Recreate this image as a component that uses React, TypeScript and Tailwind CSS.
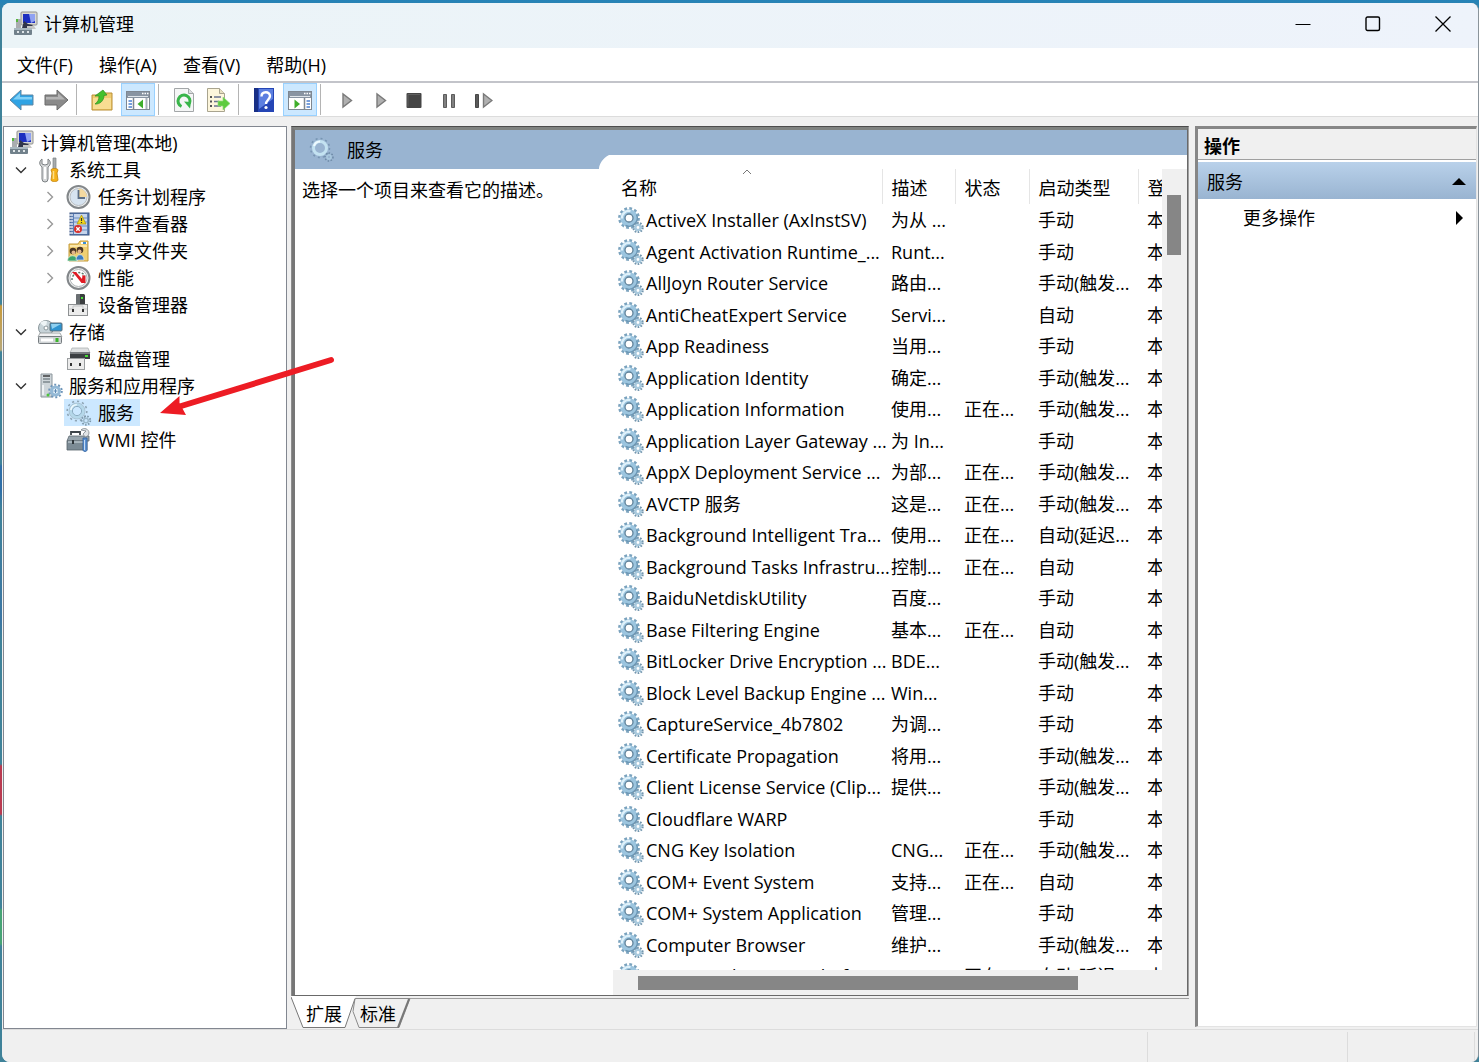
import { useState } from "react"
import type { ReactNode } from "react"

type Service = {
  name: string
  desc: string
  status?: string
  startup: string
}

const RUNNING = "正在..."
const MANUAL = "手动"
const AUTO = "自动"
const TRIGGER = "手动(触发..."
const DELAYED = "自动(延迟..."

const services: Service[] = [
  { name: "ActiveX Installer (AxInstSV)", desc: "为从 ...", startup: MANUAL },
  { name: "Agent Activation Runtime_...", desc: "Runt...", startup: MANUAL },
  { name: "AllJoyn Router Service", desc: "路由...", startup: TRIGGER },
  { name: "AntiCheatExpert Service", desc: "Servi...", startup: AUTO },
  { name: "App Readiness", desc: "当用...", startup: MANUAL },
  { name: "Application Identity", desc: "确定...", startup: TRIGGER },
  { name: "Application Information", desc: "使用...", status: RUNNING, startup: TRIGGER },
  { name: "Application Layer Gateway ...", desc: "为 In...", startup: MANUAL },
  { name: "AppX Deployment Service ...", desc: "为部...", status: RUNNING, startup: TRIGGER },
  { name: "AVCTP 服务", desc: "这是...", status: RUNNING, startup: TRIGGER },
  { name: "Background Intelligent Tra...", desc: "使用...", status: RUNNING, startup: DELAYED },
  { name: "Background Tasks Infrastru...", desc: "控制...", status: RUNNING, startup: AUTO },
  { name: "BaiduNetdiskUtility", desc: "百度...", startup: MANUAL },
  { name: "Base Filtering Engine", desc: "基本...", status: RUNNING, startup: AUTO },
  { name: "BitLocker Drive Encryption ...", desc: "BDE...", startup: TRIGGER },
  { name: "Block Level Backup Engine ...", desc: "Win...", startup: MANUAL },
  { name: "CaptureService_4b7802", desc: "为调...", startup: MANUAL },
  { name: "Certificate Propagation", desc: "将用...", startup: TRIGGER },
  { name: "Client License Service (Clip...", desc: "提供...", startup: TRIGGER },
  { name: "Cloudflare WARP", desc: "", startup: MANUAL },
  { name: "CNG Key Isolation", desc: "CNG...", status: RUNNING, startup: TRIGGER },
  { name: "COM+ Event System", desc: "支持...", status: RUNNING, startup: AUTO },
  { name: "COM+ System Application", desc: "管理...", startup: MANUAL },
  { name: "Computer Browser", desc: "维护...", startup: TRIGGER },
  { name: "Connected Devices Platfor...", desc: "", status: RUNNING, startup: DELAYED },
]

/* ---------- icons ---------- */

function ComputerIcon() {
  return (
    <svg width="26" height="26" viewBox="0 0 26 26">
      <rect x="8" y="1" width="16" height="13" rx="1" fill="#d9d9d4" stroke="#8f908c" />
      <rect x="10" y="3" width="12" height="9" fill="#1c2fc0" />
      <path d="M16 3h6v7l-4 2z" fill="#8fa2f2" />
      <path d="M3 8h5v9H3z" fill="#a9adb0" />
      <rect x="3" y="8" width="2" height="3" fill="#56b83c" />
      <path d="M11 10l-2 7h8l3-3-5-1z" fill="#30364a" />
      <path d="M14 15h7l2 3h-9z" fill="#c7c8c6" />
      <rect x="1" y="17" width="18" height="7" rx="1" fill="#71818b" />
      <path d="M1 18h18" stroke="#a9b8c0" strokeWidth="2" />
      <path d="M4 21h2M9 21h2M14 21h2" stroke="#dfe5e8" strokeWidth="2" />
    </svg>
  )
}

function GearIcon() {
  return (
    <svg width="26" height="26" viewBox="0 0 26 26" fill="none" className="shrink-0">
      <circle cx="11" cy="11" r="9.300" stroke="#7ba3be" strokeWidth="3.200" strokeDasharray="2.700 2.170" />
      <circle cx="11" cy="11" r="6.300" stroke="#9cc5df" strokeWidth="5" />
      <path d="M18.500 7.500a8.300 8.300 0 0 1-11 11" stroke="#6c97b5" strokeWidth="1.400" />
      <path d="M4 11.500a7 7 0 0 1 8.500-7.500" stroke="#dff1fa" strokeWidth="2.200" />
      <circle cx="11" cy="11" r="4" stroke="#5d8099" strokeWidth="1.300" fill="#fff" />
      <circle cx="20" cy="20.500" r="4.500" stroke="#7396ae" strokeWidth="2.400" strokeDasharray="1.600 1.230" />
      <circle cx="20" cy="20.500" r="2.600" stroke="#a9cade" strokeWidth="2.400" />
    </svg>
  )
}

function FadedGearIcon() {
  return (
    <svg width="26" height="26" viewBox="0 0 26 26" fill="none" className="shrink-0">
      <circle cx="11" cy="11" r="9.800" stroke="#8fa6b6" strokeWidth="1.600" strokeDasharray="2.200 2.900" />
      <circle cx="11" cy="11" r="6.300" stroke="#b5d8ea" strokeWidth="3" />
      <circle cx="11" cy="11" r="8" stroke="#a3bccb" strokeWidth="0.800" />
      <circle cx="11" cy="11" r="4.600" stroke="#86a6ba" strokeWidth="0.900" />
      <path d="M4.800 10a6.300 6.300 0 0 1 6-5.300" stroke="#effafe" strokeWidth="1.600" />
      <circle cx="20" cy="20.500" r="4.300" stroke="#7d98ab" strokeWidth="1.800" strokeDasharray="1.500 1.500" />
      <circle cx="20" cy="20.500" r="2.300" stroke="#9dbacb" strokeWidth="1.500" />
    </svg>
  )
}

function HeaderGear() {
  return (
    <svg width="26" height="26" viewBox="0 0 26 26" fill="none">
      <circle cx="11" cy="11" r="9.500" stroke="#7795b2" strokeWidth="1.500" strokeDasharray="2 3" />
      <circle cx="11" cy="11" r="6.500" stroke="#c3e2f1" strokeWidth="3" />
      <path d="M5 9a6.500 6.500 0 0 1 6-4.500" stroke="#eefaff" strokeWidth="2" />
      <circle cx="20" cy="20" r="4" stroke="#6d8aa6" strokeWidth="1.500" strokeDasharray="1.500 1.500" />
      <circle cx="20" cy="20" r="2" stroke="#a9c8de" strokeWidth="1.500" />
    </svg>
  )
}

function ToolsIcon() {
  return (
    <svg width="26" height="26" viewBox="0 0 26 26">
      <path d="M5 2C2 4 2 8 5 10v12a3 3 0 0 0 6 0V10c3-2 3-6 0-8v5l-3 1-3-1z" fill="#d5d7d8" stroke="#7c8083" />
      <path d="M8 10v12" stroke="#fff" strokeWidth="2" />
      <path d="M16 1h3v11h-3z" fill="#a7abad" stroke="#7d8184" strokeWidth="0.700" />
      <path d="M14 13c0-2 7-2 7 0l-1 3 1 7c0 2-7 2-7 0l1-7z" fill="#f6b21b" stroke="#c0820c" strokeWidth="0.800" />
      <path d="M16.500 14v8" stroke="#fde08a" strokeWidth="1.500" />
    </svg>
  )
}

function ClockIcon() {
  return (
    <svg width="26" height="26" viewBox="0 0 26 26">
      <circle cx="12.500" cy="13" r="11" fill="#eef0f1" stroke="#83878a" strokeWidth="2" />
      <circle cx="12.500" cy="13" r="8.500" fill="#d6e3f0" stroke="#b9bec2" />
      <path d="M12.500 13V4.500a8.500 8.500 0 0 1 8.500 8.500z" fill="#f3d9a0" />
      <path d="M12.500 6v8H19" fill="none" stroke="#5d6f86" strokeWidth="1.800" />
    </svg>
  )
}

function EventIcon() {
  return (
    <svg width="26" height="26" viewBox="0 0 26 26">
      <rect x="4" y="2" width="19" height="22" fill="#5d7fb4" stroke="#3a5582" />
      <rect x="8" y="3" width="13" height="20" fill="#c4d4ec" />
      <path d="M8 7h13M8 11h13M8 15h13M8 19h13" stroke="#6d8dc0" />
      <path d="M3 4h4M3 7h4M3 10h4M3 13h4M3 16h4M3 19h4M3 22h4" stroke="#dde4ee" strokeWidth="1.400" />
      <path d="M15.500 4l4.500 9h-9z" fill="#f4d81b" stroke="#a8910d" strokeWidth="0.700" />
      <path d="M15.500 7v3M15.500 11v1" stroke="#333" strokeWidth="1.200" />
      <circle cx="12" cy="18" r="4" fill="#d8302c" />
      <path d="M10.300 16.300l3.400 3.400M13.700 16.300l-3.400 3.400" stroke="#fff" strokeWidth="1.300" />
    </svg>
  )
}

function SharedFolderIcon() {
  return (
    <svg width="26" height="26" viewBox="0 0 26 26">
      <path d="M3 6h9l2-3h8v20H3z" fill="#f0cf72" stroke="#c49a38" />
      <path d="M15 4h6v2h-6z" fill="#fff" />
      <path d="M17 4h3v2h-3z" fill="#3a8fd6" />
      <path d="M4 8h17" stroke="#fbe6a8" strokeWidth="2" />
      <circle cx="7" cy="13" r="3.300" fill="#4b3523" />
      <circle cx="7.500" cy="14.500" r="2" fill="#e2b58b" />
      <path d="M1.500 23c0-7 10-7 10 0z" fill="#3fa66b" stroke="#e4f2ea" strokeWidth="0.700" />
      <circle cx="14" cy="12" r="3.300" fill="#4b3523" />
      <circle cx="13.500" cy="13.500" r="2" fill="#e2b58b" />
      <path d="M10 22c0-7 8-7 8 0z" fill="#3d7cc0" stroke="#dbe8f5" strokeWidth="0.700" />
    </svg>
  )
}

function PerformanceIcon() {
  return (
    <svg width="26" height="26" viewBox="0 0 26 26">
      <circle cx="12.500" cy="13" r="11" fill="#eceded" stroke="#83878a" strokeWidth="2" />
      <circle cx="12.500" cy="13" r="8.500" fill="#fff" stroke="#b5b9bb" />
      <path d="M6 15a7 7 0 0 1 13-4" fill="none" stroke="#5a7b6b" strokeWidth="1.500" strokeDasharray="2 1.500" />
      <path d="M6 7h4l6 7 .5-4 3 1v7h-4L9.500 10.500z" fill="#e01b24" />
    </svg>
  )
}

function DeviceIcon() {
  return (
    <svg width="26" height="26" viewBox="0 0 26 26">
      <path d="M11 2h7l1 1v10h-9V3z" fill="#3a3d3f" />
      <path d="M11 2h3v11h-4V3z" fill="#6a6f72" />
      <rect x="15" y="5" width="2" height="2" fill="#4be03a" />
      <rect x="2.500" y="12.500" width="19" height="11" fill="#ececec" stroke="#8e9193" />
      <path d="M3 17h4v-3h10v3h4" fill="none" stroke="#c3c5c6" />
      <path d="M6 17h2v3H6zM16 17h2v3h-2z" fill="#333" />
    </svg>
  )
}

function StorageIcon() {
  return (
    <svg width="26" height="26" viewBox="0 0 26 26">
      <circle cx="9" cy="9" r="7.500" fill="#c7d3d8" stroke="#8b979c" />
      <path d="M9 9L3 4a8 8 0 0 1 7-2z" fill="#eef4f6" />
      <circle cx="9" cy="9" r="2" fill="#fff" stroke="#8b979c" />
      <rect x="13" y="4" width="12" height="8" rx="1" fill="#2f93cf" stroke="#5c6c76" />
      <path d="M14 5h10l-9 5z" fill="#8fd0f0" />
      <path d="M3 14h20l2 4H1z" fill="#f0f1f2" stroke="#8e9496" strokeWidth="0.800" />
      <rect x="1.500" y="17.500" width="23" height="7" rx="1" fill="#cfd3d5" stroke="#767c80" />
      <rect x="4" y="19.500" width="12" height="3" fill="#fff" />
      <rect x="18.500" y="19" width="3" height="4" fill="#3db52b" />
    </svg>
  )
}

function DiskIcon() {
  return (
    <svg width="26" height="26" viewBox="0 0 26 26">
      <path d="M6 2h16l2 5H4z" fill="#dfe1e2" stroke="#a5a9ab" strokeWidth="0.700" />
      <rect x="4" y="7" width="20" height="6" fill="#3b3f42" />
      <path d="M4 7h20" stroke="#797d80" strokeWidth="2" />
      <rect x="19" y="9" width="3" height="2" fill="#48dc36" />
      <rect x="1.500" y="12.500" width="17" height="11" fill="#ececec" stroke="#9b9ea0" />
      <path d="M4 17h2v3H4zM13 17h2v3h-2z" fill="#333" />
    </svg>
  )
}

function ServerIcon() {
  return (
    <svg width="26" height="26" viewBox="0 0 26 26" fill="none">
      <path d="M4 1h11v23H4z" fill="#ced5d9" stroke="#8c969c" />
      <path d="M6 3h7" stroke="#333" strokeWidth="1.400" />
      <path d="M6 6h7M6 9h7" stroke="#7c868c" strokeWidth="1.400" />
      <path d="M6 12v10" stroke="#eef2f4" strokeWidth="2" />
      <circle cx="18.500" cy="18" r="6.300" stroke="#6f95b8" strokeWidth="2" strokeDasharray="2 1.950" />
      <circle cx="18.500" cy="18" r="4" fill="#e8f3fb" stroke="#94b9d6" strokeWidth="3" />
      <path d="M16.500 18h4M18.500 16v4" stroke="#5b88b2" />
      <circle cx="11" cy="22" r="1.500" fill="#4ec43b" />
    </svg>
  )
}

function ToolboxIcon() {
  return (
    <svg width="26" height="26" viewBox="0 0 26 26">
      <path d="M5 8V5h9v3" fill="none" stroke="#3e454a" strokeWidth="1.800" />
      <path d="M3 9h20v5H1z" fill="#98a5ad" stroke="#5e6a72" strokeWidth="0.800" />
      <path d="M1 14h20v9H1z" fill="#7c8b95" stroke="#56626a" strokeWidth="0.800" />
      <path d="M2 15h17" stroke="#b9c4cb" strokeWidth="1.500" />
      <path d="M6 13h2v4H6z" fill="#2f363b" />
      <path d="M15 3c3-3 8-1 8 3 0 3-3 4-4 4l-2-3 3-3z" fill="#e2e5e7" stroke="#7e858a" strokeWidth="0.800" />
      <path d="M17 11h4v12c0 2-4 2-4 0z" fill="#5f94d3" stroke="#2d5e9c" strokeWidth="0.800" />
      <path d="M18.500 13v10" stroke="#c6dcf5" />
    </svg>
  )
}

function ArrowIcon({ color }: { color: "blue" | "gray" }) {
  const blue = color === "blue"
  return (
    <svg width="26" height="24" viewBox="0 0 26 24" className={blue ? "" : "-scale-x-100"}>
      <path d="M1 12L12 2v5h12v10H12v5z" fill={blue ? "#2fa3e4" : "#8a8a8a"} stroke={blue ? "#5f86a3" : "#6a6a6a"} />
      <path d="M4 11.500L11 5v4h12v2.500z" fill={blue ? "#7fd0f7" : "#b5b5b5"} />
    </svg>
  )
}

function UpFolderIcon() {
  return (
    <svg width="24" height="24" viewBox="0 0 24 24">
      <path d="M2 7h7l2-2h11v17H2z" fill="#efcb6f" stroke="#b98e35" />
      <path d="M3 10h18v11H3z" fill="#f8dd92" />
      <path d="M5 16c3-2 4-5 4-8H5l8-6 4 5-3 .5c0 5-4 9-9 8.500z" fill="#43c12d" stroke="#2e8c1f" strokeWidth="0.700" />
    </svg>
  )
}

function PaneIcon({ side }: { side: "left" | "right" }) {
  return (
    <svg width="26" height="24" viewBox="0 0 26 24">
      <rect x="1.500" y="3.500" width="23" height="18" fill="#fff" stroke="#7e8791" />
      <rect x="2" y="4" width="22" height="6" fill="#8894a2" />
      <path d="M3 8.500h20" stroke="#dfe5ea" />
      <path d="M17 5.500h1.500M19.500 5.500H21M22 5.500h1.500" stroke="#fff" strokeWidth="1.500" />
      {side === "left" ? (
        <>
          <path d="M8.500 10v11" stroke="#7e8791" strokeWidth="1.500" />
          <path d="M3.500 13h3.500M3.500 16h3.500M3.500 19h3.500" stroke="#4a7fd0" strokeWidth="1.500" />
          <path d="M18 11.500v9L12.500 16z" fill="#3fae2b" />
          <path d="M21.500 10v11" stroke="#a9b1b9" strokeWidth="2" />
        </>
      ) : (
        <>
          <path d="M17.500 10v11" stroke="#7e8791" strokeWidth="1.500" />
          <path d="M19.500 13h3.500M19.500 16h3.500M19.500 19h3.500" stroke="#4a7fd0" strokeWidth="1.500" />
          <path d="M7.500 11.500v9l5.500-4.500z" fill="#3fae2b" />
        </>
      )}
    </svg>
  )
}

function RefreshIcon() {
  return (
    <svg width="24" height="26" viewBox="0 0 24 26">
      <path d="M2.500 1.500h14l5 5v18h-19z" fill="#f5f6f6" stroke="#a3a6a8" />
      <path d="M16.500 1.500v5h5" fill="#dcdedf" stroke="#a3a6a8" />
      <path d="M9.500 19.500a6 6 0 1 1 8-3" fill="none" stroke="#39b54a" strokeWidth="3" />
      <path d="M12 14.500l7 .500-1 6.500z" fill="#39b54a" />
    </svg>
  )
}

function ExportIcon() {
  return (
    <svg width="26" height="26" viewBox="0 0 26 26">
      <path d="M2.500 1.500h12l5 5v18h-17z" fill="#fdf6dc" stroke="#a9a48f" />
      <path d="M14.500 1.500v5h5" fill="#e8e0c2" stroke="#a9a48f" />
      <path d="M5 10h2M5 14.500h2M5 19h2" stroke="#555" strokeWidth="1.800" />
      <path d="M9 10h7M9 14.500h5M9 19h7" stroke="#6a7390" strokeWidth="1.500" />
      <path d="M13 14h5v-4l7 6.500-7 6.500v-4h-5z" fill="#5ecb3e" stroke="#8fdc7b" strokeWidth="0.700" />
    </svg>
  )
}

function HelpIcon() {
  return (
    <svg width="24" height="26" viewBox="0 0 24 26">
      <rect x="2" y="1" width="20" height="24" fill="#2545b5" />
      <rect x="2" y="1" width="4" height="24" fill="#182f86" />
      <path d="M7 2h14v10L7 22z" fill="#5c7fe0" />
      <path d="M9.500 9.500C9.500 4 18 4 18 9c0 3.500-4 4-4 8" fill="none" stroke="#fff" strokeWidth="2.400" />
      <circle cx="14" cy="20.500" r="1.600" fill="#fff" />
    </svg>
  )
}

function PlayIcon() {
  return (
    <svg width="20" height="20" viewBox="0 0 20 20">
      <path d="M7 4v13l8.500-6.500z" fill="#b0b0b0" stroke="#7a7a7a" strokeWidth="1.400" />
    </svg>
  )
}

function StopIcon() {
  return (
    <svg width="20" height="20" viewBox="0 0 20 20">
      <rect x="2.500" y="3" width="15" height="15" rx="1" fill="#454545" />
      <path d="M4 16.500v-12h12" fill="none" stroke="#606060" />
    </svg>
  )
}

function PauseIcon() {
  return (
    <svg width="20" height="20" viewBox="0 0 20 20">
      <path d="M5.500 4.500h3v13h-3zM13.500 4.500h3v13h-3z" fill="#808080" stroke="#5c5c5c" />
    </svg>
  )
}

function RestartIcon() {
  return (
    <svg width="22" height="20" viewBox="0 0 22 20">
      <path d="M4.500 4.500h3v13h-3z" fill="#5a5a5a" stroke="#484848" />
      <path d="M12.500 4v13l8.500-6.500z" fill="#b0b0b0" stroke="#7a7a7a" strokeWidth="1.400" />
    </svg>
  )
}

/* ---------- parts ---------- */

function TitleBar() {
  return (
    <header className="flex h-[45px] shrink-0 items-center bg-linear-to-r from-[#ebf4f7] to-[#eef3fb] pb-[3px] pl-[11px]">
      <ComputerIcon />
      <h1 className="ml-[5px] flex-1 leading-6">计算机管理</h1>
      <button aria-label="最小化" className="flex h-full w-[70px] items-center justify-center">
        <svg width="16" height="16" viewBox="0 0 16 16"><path d="M.5 8.500h15" stroke="#000" /></svg>
      </button>
      <button aria-label="最大化" className="flex h-full w-[70px] items-center justify-center">
        <svg width="16" height="16" viewBox="0 0 16 16" fill="none"><rect x="1" y="1" width="13.500" height="13.500" rx="1.500" stroke="#000" strokeWidth="1.400" /></svg>
      </button>
      <button aria-label="关闭" className="flex h-full w-[70px] items-center justify-center">
        <svg width="16" height="16" viewBox="0 0 16 16"><path d="M.5.5l15 15M15.500.5l-15 15" stroke="#000" strokeWidth="1.300" /></svg>
      </button>
    </header>
  )
}

function MenuBar() {
  return (
    <nav className="flex h-[35px] shrink-0 items-center border-b-2 border-[#c3c4ca] bg-white pl-0.5">
      {["文件(F)", "操作(A)", "查看(V)", "帮助(H)"].map((m) => (
        <button key={m} className="px-[13px] leading-6">{m}</button>
      ))}
    </nav>
  )
}

function ToolButton({ label, active = false, children }: { label: string; active?: boolean; children: ReactNode }) {
  return (
    <button
      aria-label={label}
      className={
        active
          ? "ml-0.5 flex h-[33px] w-[34px] items-center justify-center border border-[#99d1ff] bg-[#cce8ff]"
          : "flex h-[33px] w-[34px] items-center justify-center"
      }
    >
      {children}
    </button>
  )
}

function Separator() {
  return (
    <span className="flex h-[31px] w-3 pl-[3px]">
      <span className="w-px bg-[#b4b4b4]" />
    </span>
  )
}

function Toolbar() {
  return (
    <div className="flex h-[34px] shrink-0 items-center border-b border-[#dcdcdc] bg-white pl-[3px]">
      <ToolButton label="后退"><ArrowIcon color="blue" /></ToolButton>
      <ToolButton label="前进"><ArrowIcon color="gray" /></ToolButton>
      <Separator />
      <ToolButton label="上一级"><UpFolderIcon /></ToolButton>
      <ToolButton label="显示/隐藏控制台树" active><PaneIcon side="left" /></ToolButton>
      <Separator />
      <ToolButton label="刷新"><RefreshIcon /></ToolButton>
      <ToolButton label="导出列表"><ExportIcon /></ToolButton>
      <Separator />
      <ToolButton label="帮助"><HelpIcon /></ToolButton>
      <ToolButton label="显示/隐藏操作窗格" active><PaneIcon side="right" /></ToolButton>
      <Separator />
      <ToolButton label="启动服务"><PlayIcon /></ToolButton>
      <ToolButton label="继续服务"><PlayIcon /></ToolButton>
      <ToolButton label="停止服务"><StopIcon /></ToolButton>
      <ToolButton label="暂停服务"><PauseIcon /></ToolButton>
      <ToolButton label="重新启动服务"><RestartIcon /></ToolButton>
    </div>
  )
}

type Node = { label: string; icon: ReactNode; level: number; state?: "open" | "closed" }

const nodes: Node[] = [
  { label: "计算机管理(本地)", icon: <ComputerIcon />, level: 0 },
  { label: "系统工具", icon: <ToolsIcon />, level: 1, state: "open" },
  { label: "任务计划程序", icon: <ClockIcon />, level: 2, state: "closed" },
  { label: "事件查看器", icon: <EventIcon />, level: 2, state: "closed" },
  { label: "共享文件夹", icon: <SharedFolderIcon />, level: 2, state: "closed" },
  { label: "性能", icon: <PerformanceIcon />, level: 2, state: "closed" },
  { label: "设备管理器", icon: <DeviceIcon />, level: 2 },
  { label: "存储", icon: <StorageIcon />, level: 1, state: "open" },
  { label: "磁盘管理", icon: <DiskIcon />, level: 2 },
  { label: "服务和应用程序", icon: <ServerIcon />, level: 1, state: "open" },
  { label: "服务", icon: <FadedGearIcon />, level: 2 },
  { label: "WMI 控件", icon: <ToolboxIcon />, level: 2 },
]

const indent = ["pl-[3px]", "pl-[7px]", "pl-[36px]"]

function Tree() {
  const [selected, setSelected] = useState("服务")
  return (
    <ul className="w-[284px] shrink-0 overflow-hidden border border-[#828790] bg-white pt-0.5">
      {nodes.map((n) => (
        <li key={n.label} className={"flex h-[27px] items-center " + indent[n.level]}>
          {n.level > 0 && (
            <span className="mr-1 flex w-5 justify-center">
              {n.state === "open" && (
                <svg width="12" height="12" viewBox="0 0 12 12" fill="none"><path d="M1 3.500l5 5 5-5" stroke="#333" strokeWidth="1.400" /></svg>
              )}
              {n.state === "closed" && (
                <svg width="12" height="12" viewBox="0 0 12 12" fill="none"><path d="M3.500 1l5 5-5 5" stroke="#999" strokeWidth="1.400" /></svg>
              )}
            </span>
          )}
          <button
            onClick={() => setSelected(n.label)}
            className={
              selected === n.label
                ? "flex h-[27px] items-center gap-1.5 bg-[#cce8ff] pr-1.5 pl-0.5"
                : "flex h-[27px] items-center gap-1.5 pr-1.5 pl-0.5"
            }
          >
            {n.icon}
            <span className="leading-6 whitespace-nowrap">{n.label}</span>
          </button>
        </li>
      ))}
    </ul>
  )
}

function ServiceTable() {
  return (
    <table className="w-full table-fixed border-collapse text-left">
      <thead>
        <tr className="h-[35px]">
          <th className="relative w-[269px] border-r border-[#e5e5e5] p-0 pt-[3px] pl-2 font-normal">
            名称
            <svg width="10" height="6" viewBox="0 0 10 6" fill="none" className="absolute top-0 left-1/2 -translate-x-1/2">
              <path d="M1 5l4-4 4 4" stroke="#777" />
            </svg>
          </th>
          <th className="w-[73px] border-r border-[#e5e5e5] p-0 pt-[3px] pl-[9px] font-normal">描述</th>
          <th className="w-[74px] border-r border-[#e5e5e5] p-0 pt-[3px] pl-[9px] font-normal">状态</th>
          <th className="w-[109px] border-r border-[#e5e5e5] p-0 pt-[3px] pl-[9px] font-normal">启动类型</th>
          <th className="overflow-hidden p-0 pt-[3px] pl-[9px] font-normal whitespace-nowrap">登</th>
        </tr>
      </thead>
      <tbody>
        {services.map((s) => (
          <tr key={s.name} className="odd:h-8 even:h-[31px] last:h-[34px]">
            <td className="p-0 pl-[5px]">
              <div className="flex h-6 items-center gap-0.5">
                <GearIcon />
                <span className="leading-6 whitespace-nowrap">{s.name}</span>
              </div>
            </td>
            <td className="p-0 pl-[9px] leading-6 whitespace-nowrap">{s.desc}</td>
            <td className="p-0 pl-[9px] leading-6 whitespace-nowrap">{s.status}</td>
            <td className="p-0 pl-[9px] leading-6 whitespace-nowrap">{s.startup}</td>
            <td className="overflow-hidden p-0 pl-[9px] leading-6 whitespace-nowrap">本</td>
          </tr>
        ))}
      </tbody>
    </table>
  )
}

function ResultPane() {
  return (
    <main className="ml-1 flex min-w-0 flex-1 flex-col">
      <div className="flex min-h-0 flex-1 flex-col border-t border-r border-l border-t-[#4c4c4c] border-r-[#a0a0a0] border-l-[#8c8c8c]">
        <div className="flex min-h-0 flex-1 flex-col border-t-[3px] border-r border-b border-l-[3px] border-t-[#7f8280] border-r-[#696969] border-b-[#696969] border-l-[#767676] bg-white">
          <div className="flex h-[39px] shrink-0 items-end bg-[#99b4d1]">
            <div className="flex h-full w-[302px] shrink-0 items-center pl-3.5">
              <HeaderGear />
              <h2 className="ml-3 leading-6">服务</h2>
            </div>
            <svg width="16" height="14" viewBox="0 0 16 14" className="shrink-0"><path d="M0 14h2c0-5 4-11 10-14h4v14z" fill="#fff" /></svg>
            <div className="h-[14px] flex-1 bg-white" />
          </div>
          <div className="flex min-h-0 flex-1">
            <p className="w-[318px] shrink-0 pt-[9px] pl-[7px] leading-6">选择一个项目来查看它的描述。</p>
            <div className="flex min-w-0 flex-1 flex-col">
              <div className="flex min-h-0 flex-1">
                <div className="min-w-0 flex-1 overflow-hidden"><ServiceTable /></div>
                <div className="w-[25px] shrink-0 bg-[#f0f0f0] pt-[26px] pl-[5px]">
                  <div className="h-[60px] w-3.5 bg-[#868686]" />
                </div>
              </div>
              <div className="flex h-[25px] shrink-0 items-center bg-[#f0f0f0] px-[25px]">
                <div className="h-3.5 w-[84%] bg-[#868686]" />
              </div>
            </div>
          </div>
        </div>
      </div>
      <div className="relative flex h-[33px] shrink-0 pt-[2px]">
        <svg width="120" height="33" viewBox="0 0 120 33" fill="none" className="absolute top-0 left-0">
          <path d="M64 2.500h55l-11 29H68l-6-16z" fill="#f0f0f0" stroke="#8a8a8a" />
          <path d="M118 3l-11 28.500" stroke="#777" strokeWidth="2" />
          <path d="M0 0h65l-11 31.500H12z" fill="#fff" />
          <path d="M0 1l12 30.500h42l10-29" stroke="#777" />
        </svg>
        <button className="relative ml-[9px] w-[48px] text-center leading-7">扩展</button>
        <button className="relative ml-[6px] w-[48px] text-center leading-7">标准</button>
        <div className="ml-[7px] flex-1 border-t border-[#a0a0a0]" />
      </div>
    </main>
  )
}

function ActionsPane() {
  return (
    <aside className="mr-px mb-0.5 ml-1.5 w-[282px] shrink-0 border-t-[3px] border-r border-b border-l-[3px] border-t-[#868686] border-r-[#e3e3e3] border-b-[#e3e3e3] border-l-[#868686] bg-white">
      <h2 className="h-[31px] border-b border-[#a0a0a0] bg-[#f0f0f0] pt-[5px] pl-1.5 leading-6 font-bold">操作</h2>
      <button className="mt-0.5 flex h-[37px] w-full items-center justify-between bg-linear-to-b from-[#b9d1ea] to-[#99b4d1] pt-0.5 pr-2.5 pl-[9px]">
        <span className="leading-6">服务</span>
        <svg width="14" height="7" viewBox="0 0 14 7"><path d="M0 7l7-7 7 7z" fill="#000" /></svg>
      </button>
      <button className="flex h-9 w-full items-center justify-between pt-0.5 pr-[13px] pl-[45px]">
        <span className="leading-6">更多操作</span>
        <svg width="7" height="14" viewBox="0 0 7 14"><path d="M0 0l7 7-7 7z" fill="#000" /></svg>
      </button>
    </aside>
  )
}

function StatusBar() {
  return (
    <footer className="flex h-[33px] shrink-0 border-t border-[#dcdcdc] bg-[#f0f0f0] pt-0.5 pr-[3px]">
      <div className="flex-1 border-r border-[#dcdcdc]" />
      <div className="w-[200px] border-r border-[#dcdcdc]" />
      <div className="w-[127px] border-r border-[#dcdcdc]" />
    </footer>
  )
}

export default function App() {
  return (
    <div className="flex h-screen flex-col bg-[linear-gradient(180deg,#2583b8_0,#3f8299_20px,#3f8299_304px,#c79a3c_306px,#b8a878_350px,#3f8299_352px,#3f8299_464px,#2f6fa8_466px,#2f6fa8_490px,#3f8299_510px,#3b76a4_620px,#3f8299_640px,#3f8299_764px,#b93a50_766px,#b93a50_814px,#3f8299_816px,#3f8299_908px,#46a375_910px,#46a375_944px,#3f8299_946px)] pt-[3px] pl-0.5 font-['Open_Sans','Noto_Sans_CJK_SC',sans-serif] text-lg text-black">
      <div className="flex min-h-0 flex-1 flex-col overflow-hidden rounded-lg border-r border-[#8b949b] bg-[#f0f0f0]">
        <TitleBar />
        <MenuBar />
        <Toolbar />
        <div className="relative flex min-h-0 flex-1 pt-[9px] pl-px">
          <Tree />
          <ResultPane />
          <ActionsPane />
          <svg width="180" height="66" viewBox="0 0 180 66" className="pointer-events-none absolute top-[236px] left-[156px]">
            <path d="M173 7L20 54" stroke="#ed1c24" strokeWidth="6" strokeLinecap="round" />
            <path d="M2 60l19.500-17v7l6.500 12z" fill="#ed1c24" />
          </svg>
        </div>
        <StatusBar />
      </div>
    </div>
  )
}
